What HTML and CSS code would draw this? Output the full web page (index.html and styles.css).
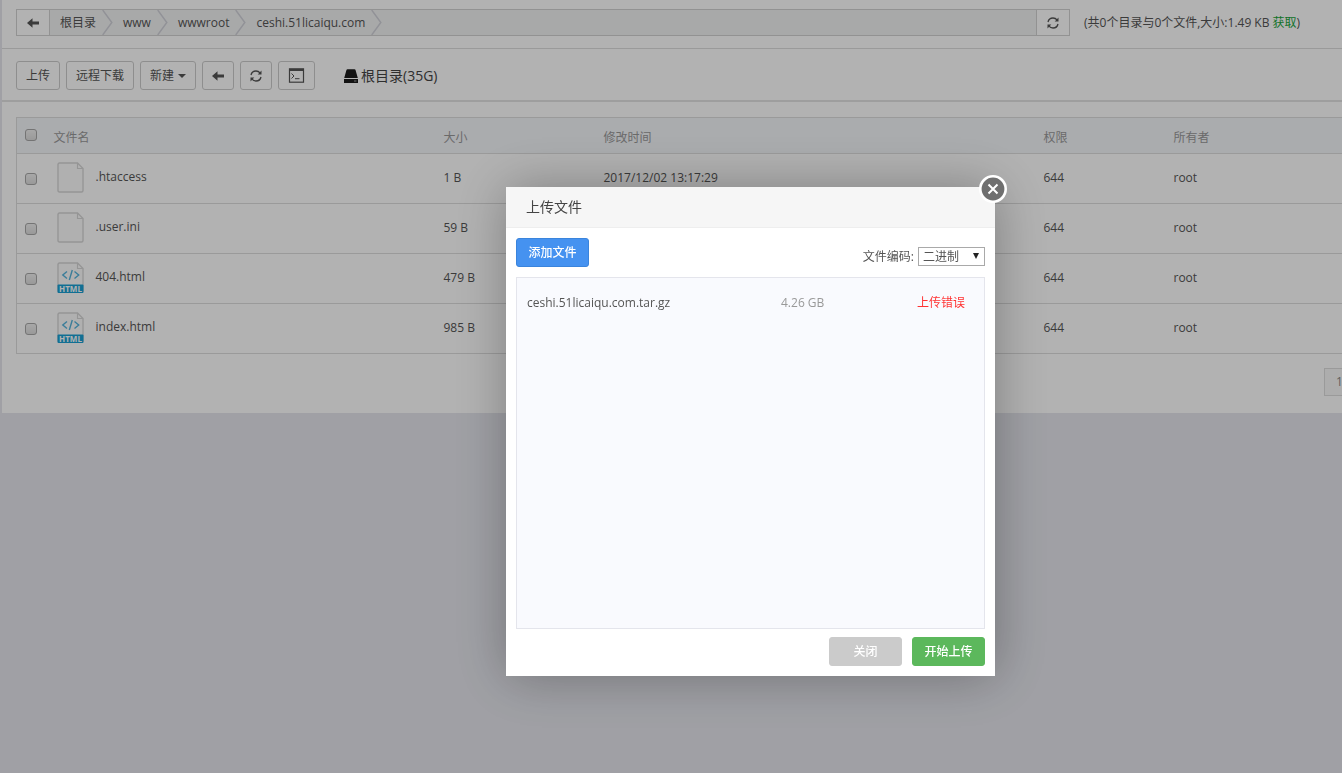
FILE: index.html
```html
<!DOCTYPE html>
<html lang="zh-CN">
<head>
<meta charset="utf-8">
<title>文件管理</title>
<link rel="stylesheet" href="styles.css">
</head>
<body>
<svg class="defs" aria-hidden="true">
  <symbol id="i-back" viewBox="0 0 14 14"><path d="M1 7 6.500 2.200V5.500H13V8.500H6.500V11.800Z" fill="currentColor"/></symbol>
  <symbol id="i-refresh" viewBox="0 0 14 14"><path d="M2 6C2.600 3.300 4.600 2 7 2c1.700 0 3 .6 4 1.900M12 8c-.6 2.700-2.600 4-5 4-1.700 0-3-.6-4-1.900" fill="none" stroke="currentColor" stroke-width="1.300"/><path d="M12.500 1.500v4H8.700ZM1.500 12.500V8.500h3.800Z" fill="currentColor"/></symbol>
  <symbol id="i-sep" viewBox="0 0 11 26"><path d="M.5 0 10 13 .5 26" fill="none" stroke="#d0d1d8" stroke-width="1.500"/></symbol>
  <symbol id="i-file" viewBox="0 0 27 31"><path d="M2.500 1H20.500L26 6.500V28.500Q26 30 24.500 30H2.500Q1 30 1 28.500V2.500Q1 1 2.500 1Z" fill="#fdfdfd" stroke="#d6d6d6" stroke-width="1.400"/><path d="M20.500 1V6.500H26" fill="none" stroke="#d6d6d6" stroke-width="1.200"/></symbol>
</svg>

<main class="panel">
  <nav class="path-row">
    <div class="path-bar">
      <button class="path-btn" aria-label="返回"><svg class="icon"><use href="#i-back"/></svg></button>
      <ol class="crumbs">
        <li><a href="#">根目录</a><svg class="sep"><use href="#i-sep"/></svg></li>
        <li><a href="#">www</a><svg class="sep"><use href="#i-sep"/></svg></li>
        <li><a href="#">wwwroot</a><svg class="sep"><use href="#i-sep"/></svg></li>
        <li><a href="#">ceshi.51licaiqu.com</a><svg class="sep"><use href="#i-sep"/></svg></li>
      </ol>
      <button class="path-btn path-refresh" aria-label="刷新"><svg class="icon"><use href="#i-refresh"/></svg></button>
    </div>
    <span class="path-info">(共0个目录与0个文件,大小:1.49 KB <a class="get" href="#">获取</a>)</span>
  </nav>

  <div class="toolbar">
    <button class="btn">上传</button>
    <button class="btn">远程下载</button>
    <button class="btn">新建<span class="caret"></span></button>
    <button class="btn btn-icon" aria-label="后退"><svg class="icon"><use href="#i-back"/></svg></button>
    <button class="btn btn-icon" aria-label="刷新列表"><svg class="icon"><use href="#i-refresh"/></svg></button>
    <button class="btn" aria-label="终端"><svg class="icon-term" viewBox="0 0 17 15"><rect x="1.500" y=".8" width="14" height="13.400" fill="none" stroke="currentColor" stroke-width="1.200"/><path d="M1.500 2H15.500" stroke="currentColor" stroke-width="2"/><path d="M3.500 5.500 6 8 3.500 10.500M7 10.700H11.500" fill="none" stroke="currentColor"/></svg></button>
    <a class="disk" href="#"><svg class="icon-disk" viewBox="0 0 14 14"><path d="M3.500.3H10.500Q11.400.3 11.600 1.200L13.800 9H.2L2.400 1.200Q2.600.3 3.500.3Z" fill="#1a1a1a"/><path d="M0 10H14V14H0Z" fill="#1a1a1a"/><path d="M10 12H12.500" stroke="#999"/></svg>根目录(35G)</a>
  </div>

  <table class="files">
    <colgroup><col class="c-check"><col class="c-name"><col class="c-size"><col class="c-time"><col class="c-perm"><col></colgroup>
    <thead>
      <tr><th><input type="checkbox" aria-label="全选"></th><th>文件名</th><th>大小</th><th>修改时间</th><th>权限</th><th>所有者</th></tr>
    </thead>
    <tbody>
      <tr><td><input type="checkbox" aria-label=".htaccess"></td><td><span class="name"><svg class="file"><use href="#i-file"/></svg>.htaccess</span></td><td>1 B</td><td>2017/12/02 13:17:29</td><td>644</td><td>root</td></tr>
      <tr><td><input type="checkbox" aria-label=".user.ini"></td><td><span class="name"><svg class="file"><use href="#i-file"/></svg>.user.ini</span></td><td>59 B</td><td></td><td>644</td><td>root</td></tr>
      <tr><td><input type="checkbox" aria-label="404.html"></td><td><span class="name"><svg class="file" viewBox="0 0 27 31"><use href="#i-file"/><path d="M10 9.500 5.800 13 10 16.500M17.500 9.500 21.700 13 17.500 16.500M15.300 8 12.300 18" fill="none" stroke="#55b3dc" stroke-width="1.400"/><rect x=".5" y="22.500" width="26" height="8.500" rx="1" fill="#199fd3"/><text class="tag" x="13.500" y="29.500" text-anchor="middle">HTML</text></svg>404.html</span></td><td>479 B</td><td></td><td>644</td><td>root</td></tr>
      <tr><td><input type="checkbox" aria-label="index.html"></td><td><span class="name"><svg class="file" viewBox="0 0 27 31"><use href="#i-file"/><path d="M10 9.500 5.800 13 10 16.500M17.500 9.500 21.700 13 17.500 16.500M15.300 8 12.300 18" fill="none" stroke="#55b3dc" stroke-width="1.400"/><rect x=".5" y="22.500" width="26" height="8.500" rx="1" fill="#199fd3"/><text class="tag" x="13.500" y="29.500" text-anchor="middle">HTML</text></svg>index.html</span></td><td>985 B</td><td></td><td>644</td><td>root</td></tr>
    </tbody>
  </table>
  <div class="pager"><span class="page">1</span></div>
</main>

<div class="shade"></div>

<section class="dialog" role="dialog" aria-labelledby="dlg-title">
  <h2 class="dialog-title" id="dlg-title">上传文件</h2>
  <button class="close" aria-label="关闭窗口"><svg viewBox="0 0 28 28"><circle cx="14" cy="14" r="12.700" fill="#6f6f6f" stroke="#fff" stroke-width="2.600"/><path d="M9.500 9.500 18.500 18.500M18.500 9.500 9.500 18.500" stroke="#fff" stroke-width="2"/></svg></button>
  <div class="dialog-body">
    <div class="dialog-top">
      <button class="action add">添加文件</button>
      <div class="encoding">
        <label for="enc">文件编码:</label>
        <span class="select-wrap"><select id="enc"><option>二进制</option></select></span>
      </div>
    </div>
    <ul class="uploads">
      <li><span class="up-name">ceshi.51licaiqu.com.tar.gz</span><span class="up-size">4.26 GB</span><span class="up-error">上传错误</span></li>
    </ul>
    <div class="dialog-foot">
      <button class="action cancel">关闭</button>
      <button class="action start">开始上传</button>
    </div>
  </div>
</section>
</body>
</html>
```

FILE: styles.css
```css
* { box-sizing: border-box; }

body {
  margin: 0;
  overflow: hidden;
  background: #e5e6ed;
  color: #555;
  font: 12px/18px "Open Sans", "Noto Sans CJK SC", sans-serif;
}

button, select { font: inherit; color: inherit; }
button { display: inline-flex; align-items: center; justify-content: center; white-space: nowrap; }
a { color: inherit; text-decoration: none; }
.defs { display: none; }
.icon { flex: none; width: 14px; height: 14px; }

.panel { margin-left: 2px; background: #fff; overflow: hidden; }

.path-row {
  display: flex;
  align-items: center;
  gap: 14px;
  padding: 9px 0 12px 14px;
  border-bottom: 1px solid #ddd;
}
.path-bar {
  flex: 1;
  display: flex;
  height: 27px;
  border: 1px solid #d2d2d2;
  background: #f1f2f3;
}
.path-btn { width: 33px; padding: 0; border: 0; border-right: 1px solid #d2d2d2; background: #fff; }
.path-refresh { border-right: 0; border-left: 1px solid #d2d2d2; }
.crumbs { flex: 1; display: flex; margin: 0; padding: 0; list-style: none; }
.crumbs li { display: flex; align-items: center; padding-left: 10px; }
.sep { width: 11px; height: 25px; margin-left: 6px; }
.path-info { flex: 0 0 258px; white-space: nowrap; }
.get { color: #20a53a; }

.toolbar {
  display: flex;
  align-items: center;
  gap: 6px;
  padding: 12px 14px 10px;
  border-bottom: 2px solid #e2e2e2;
}
.btn {
  height: 29px;
  padding: 0 9px;
  border: 1px solid #ccc;
  border-radius: 3px;
  background: #fff;
}
.btn-icon { width: 32px; padding: 0; }
.caret { margin-left: 4px; border: 4px solid transparent; border-top-color: currentColor; border-bottom: 0; }
.icon-term { width: 17px; height: 15px; }
.disk { display: flex; align-items: center; gap: 3px; margin-left: 23px; font-size: 14px; color: #444; }
.icon-disk { width: 14px; height: 14px; }

.files {
  width: calc(100% - 14px);
  margin: 15px 0 0 14px;
  border: 1px solid #ddd;
  border-right: 0;
  border-collapse: collapse;
  table-layout: fixed;
}
.c-check { width: 30px; }
.c-name { width: 390px; }
.c-size { width: 160px; }
.c-time { width: 440px; }
.c-perm { width: 130px; }
.files th, .files td { padding: 0 7px; text-align: left; border-bottom: 1px solid #ddd; }
.files th:first-child, .files td:first-child { padding: 0 8px; }
.files th { height: 36px; padding-top: 4px; background: #f4f6fa; color: #999; font-weight: 400; }
.files td { height: 50px; padding-bottom: 1px; }
.files th:first-child { padding-bottom: 2px; }
.files input {
  display: block;
  appearance: none;
  width: 12px;
  height: 12px;
  margin: 0;
  border: 1px solid #a6a6a6;
  border-radius: 3px;
  background: linear-gradient(#f0f0f0, #dcdcdc);
}
.name { display: flex; align-items: center; gap: 12px; padding: 0 0 2px 3px; }
.file { width: 27px; height: 31px; }
.tag { fill: #fff; font: 700 8px "Open Sans", sans-serif; }

.pager { display: flex; justify-content: flex-end; padding: 14px 0 17px; }
.page { width: 18px; height: 28px; padding: 4px 0 0 11px; border: 1px solid #ddd; border-right: 0; background: #f8f8f8; color: #888; }

.shade { position: fixed; inset: 0; background: rgba(0, 0, 0, .3); }

.dialog {
  position: fixed;
  left: 506px;
  top: 187px;
  width: 489px;
  background: #fff;
  box-shadow: 1px 1px 50px rgba(0, 0, 0, .3);
}
.dialog-title {
  margin: 0;
  padding: 0 20px;
  border-bottom: 1px solid #eee;
  background: #f6f6f6;
  color: #444;
  font-size: 14px;
  font-weight: 400;
  line-height: 40px;
}
.close { position: absolute; top: -13px; right: -13px; width: 30px; height: 30px; padding: 0; border: 0; background: none; }
.close svg { width: 28px; height: 28px; }
.dialog-body { padding: 10px; }
.dialog-top, .dialog-foot { display: flex; gap: 10px; }
.dialog-top { justify-content: space-between; }
.dialog-foot { justify-content: flex-end; margin-top: 8px; }
.action { width: 73px; height: 29px; padding: 0; border: 1px solid; border-radius: 3px; color: #fff; font-weight: 500; }
.add { background: #4592f0; border-color: #3a84dc; }
.cancel { background: #cbcbcb; border-color: #cbcbcb; }
.start { background: #5cb85c; border-color: #5cb85c; }
.encoding { display: flex; align-items: center; gap: 4px; padding-top: 8px; }
.select-wrap { position: relative; }
.select-wrap::after { content: ""; position: absolute; right: 6px; top: 6px; border: 3px solid transparent; border-top: 6px solid #222; border-bottom: 0; pointer-events: none; }
select { display: block; width: 67px; height: 19px; padding: 0 4px; appearance: none; border: 1px solid #a9a9a9; border-radius: 0; background: #fff; line-height: 17px; }
.uploads {
  min-height: 352px;
  margin: 10px 0 0;
  padding: 16px 19px 16px 10px;
  border: 1px solid #e4e5ec;
  background: #f9fafe;
  list-style: none;
}
.uploads li { display: flex; }
.up-name { flex: 0 0 254px; }
.up-size { color: #999; }
.up-error { margin-left: auto; color: #f33; }
```
